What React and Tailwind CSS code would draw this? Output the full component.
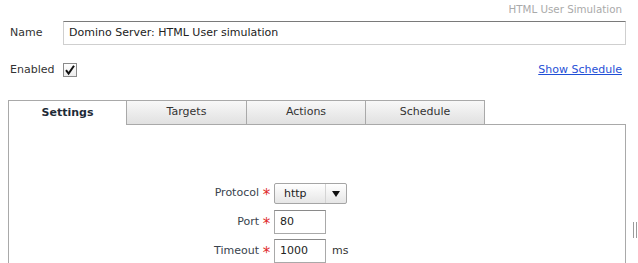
import React from 'react';

const font = { fontFamily: '"DejaVu Sans", Verdana, sans-serif' };

const Tab = ({ label, active, width }) => {
  if (active) {
    return (
      <div className="w-[118px] h-[25px] border-l border-t border-[#a9a9a9] bg-white flex items-center justify-center text-[11px] font-bold text-[#1e2b38]">
        {label}
      </div>
    );
  }
  return (
    <div
      className={`${width} h-[25px] border-l border-t border-b border-[#a9a9a9] bg-gradient-to-b from-[#f8f8f8] to-[#e1e1e1] flex items-center justify-center text-[11px] text-[#333]`}
    >
      {label}
    </div>
  );
};

const Star = () => (
  <span className="w-[15px] flex justify-center text-[15px] leading-none text-[#e02a2a] pt-[4px]">*</span>
);

const App = () => {
  return (
    <div className="w-[638px] h-[263px] overflow-hidden bg-white relative text-[#333]" style={font}>
      {/* page title */}
      <div className="h-[19px] flex items-center justify-end pr-[16px] text-[10.3px] text-[#aaa]">
        HTML User Simulation
      </div>

      {/* name row */}
      <div className="mt-[2px] flex items-center pl-[10px] pr-[12px]">
        <span className="w-[53px] text-[11px] text-[#333]">Name</span>
        <div className="flex-1 h-[24px] border border-[#cfcfcf] border-t-[#7a7a7a] flex items-center pl-[5px] text-[11px] text-[#222]">
          Domino Server: HTML User simulation
        </div>
      </div>

      {/* enabled row */}
      <div className="mt-[17px] h-[16px] flex items-center justify-between pl-[10px] pr-[16px]">
        <div className="flex items-center">
          <span className="w-[53px] text-[11px] text-[#333]">Enabled</span>
          <div className="w-[14px] h-[14px] border border-[#8a8a8a] bg-gradient-to-b from-white to-[#ececec] flex items-center justify-center">
            <svg width="12" height="12" viewBox="0 0 12 12">
              <path d="M2 6.2 L4.6 9.6 L10 1.8" fill="none" stroke="#111" strokeWidth="2" />
            </svg>
          </div>
        </div>
        <a href="#" className="text-[11px] text-[#1f4fd6] underline">Show Schedule</a>
      </div>

      {/* tabs */}
      <div className="mt-[22px] ml-[8px] flex">
        <Tab label="Settings" active />
        <Tab label="Targets" width="w-[120px]" />
        <Tab label="Actions" width="w-[119px]" />
        <Tab label="Schedule" width="w-[120px] border-r" />
        <div className="w-[141px] h-[25px] border-b border-[#a9a9a9]" />
      </div>

      {/* panel */}
      <div className="ml-[8px] w-[618px] h-[140px] border-l border-r border-[#a9a9a9] pt-[58px]">
        <div className="flex items-center h-[21px]">
          <span className="w-[250px] text-right text-[11px] text-[#39434d]">Protocol</span>
          <Star />
          <div className="w-[73px] h-[21px] border border-[#a5a5a5] rounded-[2px] bg-gradient-to-b from-white to-[#e6e6e6] flex items-center text-[11px] text-[#222]">
            <span className="w-[51px] pl-[9px] border-r border-[#d4d4d4] leading-[19px]">http</span>
            <span className="flex-1 flex justify-center">
              <svg width="8" height="6" viewBox="0 0 8 6">
                <path d="M0 0 H8 L4 6 Z" fill="#111" />
              </svg>
            </span>
          </div>
        </div>
        <div className="flex items-center h-[24px] mt-[6px]">
          <span className="w-[250px] text-right text-[11px] text-[#39434d]">Port</span>
          <Star />
          <div className="w-[52px] h-[24px] border border-[#a9a9a9] border-t-[#8a8a8a] flex items-center pl-[5px] text-[11px] text-[#222]">80</div>
        </div>
        <div className="flex items-center h-[24px] mt-[5px]">
          <span className="w-[250px] text-right text-[11px] text-[#39434d]">Timeout</span>
          <Star />
          <div className="w-[52px] h-[24px] border border-[#a9a9a9] border-t-[#8a8a8a] flex items-center pl-[5px] text-[11px] text-[#222]">1000</div>
          <span className="ml-[6px] text-[11px] text-[#333]">ms</span>
        </div>
      </div>

      {/* splitter grip */}
      <div className="absolute left-[633px] top-[222px] w-[4px] h-[16px] border-l border-r border-[#9a9a9a]" />
    </div>
  );
};

export default App;
